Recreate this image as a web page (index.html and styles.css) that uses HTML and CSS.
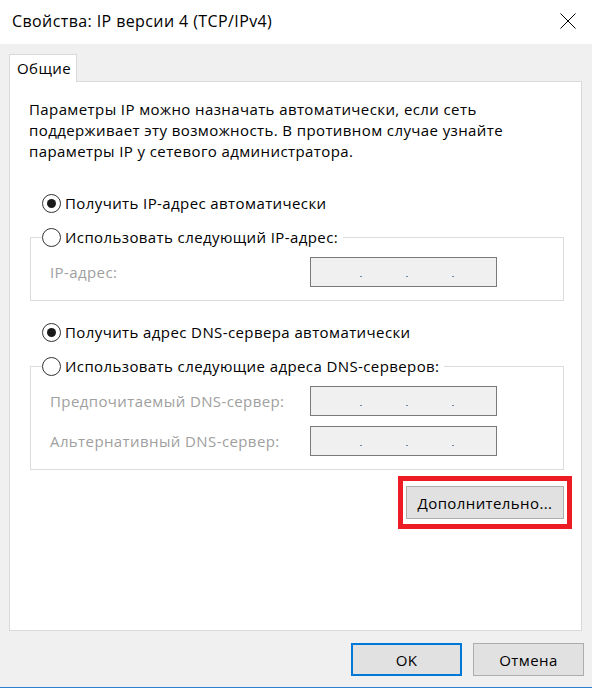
FILE: index.html
```html
<!DOCTYPE html>
<html lang="ru">
<head>
<meta charset="utf-8">
<title>Свойства: IP версии 4 (TCP/IPv4)</title>
<link rel="stylesheet" href="styles.css">
</head>
<body>
<div class="window">
  <div class="titlebar">
    <span class="title">Свойства: IP версии 4 (TCP/IPv4)</span>
    <svg class="close" width="16" height="16" viewBox="0 0 16 16"><path d="M0.5 0.5 L15.5 15.5 M15.5 0.5 L0.5 15.5" stroke="#000" stroke-width="1" fill="none"/></svg>
  </div>
  <div class="body">
    <div class="tabs"><div class="tab">Общие</div></div>
    <div class="panel">
      <p class="intro">Параметры IP можно назначать автоматически, если сеть поддерживает эту возможность. В противном случае узнайте параметры IP у сетевого администратора.</p>
      <div class="radio-row first"><span class="radio checked"></span><span>Получить IP-адрес автоматически</span></div>
      <fieldset class="group g1">
        <legend class="radio-row"><span class="radio"></span><span>Использовать следующий IP-адрес:</span></legend>
        <div class="field">
          <span class="flabel">IP-адрес:</span>
          <span class="ipbox"><i></i><i></i><i></i></span>
        </div>
      </fieldset>
      <div class="radio-row third"><span class="radio checked"></span><span>Получить адрес DNS-сервера автоматически</span></div>
      <fieldset class="group g2">
        <legend class="radio-row"><span class="radio"></span><span>Использовать следующие адреса DNS-серверов:</span></legend>
        <div class="field">
          <span class="flabel">Предпочитаемый DNS-сервер:</span>
          <span class="ipbox"><i></i><i></i><i></i></span>
        </div>
        <div class="field second">
          <span class="flabel">Альтернативный DNS-сервер:</span>
          <span class="ipbox"><i></i><i></i><i></i></span>
        </div>
      </fieldset>
      <div class="adv-row">
        <div class="highlight"><button class="btn adv">Дополнительно...</button></div>
      </div>
    </div>
    <div class="footer">
      <button class="btn ok">OK</button>
      <button class="btn">Отмена</button>
    </div>
  </div>
</div>
</body>
</html>
```

FILE: styles.css
```css
* { box-sizing: border-box; }
html, body { margin: 0; padding: 0; }
body {
  width: 592px;
  height: 688px;
  overflow: hidden;
  font-family: "Open Sans", "Liberation Sans", Arial, sans-serif;
  font-size: 15px;
  letter-spacing: 0.4px;
  color: #000;
  background: #f0f0f0;
}
.window {
  display: flex;
  flex-direction: column;
  height: 688px;
  border-bottom: 1px solid #2b7fd2;
}
.titlebar {
  height: 44px;
  background: #fff;
  display: flex;
  align-items: center;
  justify-content: space-between;
  padding: 0 16px 0 12px;
}
.title {
  font-size: 16px;
  margin-top: -2px;
}
.close { margin-top: -2px; }
.body {
  flex: 1;
  display: flex;
  flex-direction: column;
  padding: 10px 10px 0 9px;
}
.tabs { display: flex; }
.tab {
  width: 68px;
  height: 28px;
  background: #fff;
  border: 1px solid #d9d9d9;
  border-bottom: none;
  padding: 3px 0 0 7px;
  line-height: 21px;
  position: relative;
  z-index: 1;
  margin-bottom: -1px;
}
.panel {
  flex: 1;
  background: #fff;
  border: 1px solid #d9d9d9;
  padding: 17px 17px 0 19px;
  display: flex;
  flex-direction: column;
}
.intro {
  margin: 0;
  line-height: 21px;
}
.radio-row {
  display: flex;
  align-items: center;
  gap: 4px;
  line-height: 21px;
}
.radio {
  width: 19px;
  height: 19px;
  border: 1px solid #333;
  border-radius: 50%;
  background: #fff;
  display: flex;
  align-items: center;
  justify-content: center;
  flex: none;
}
.radio.checked::after {
  content: "";
  width: 9px;
  height: 9px;
  border-radius: 50%;
  background: #1a1a1a;
}
.first {
  margin: 31px 0 0 13px;
}
.group {
  margin: 13px 0 0 1px;
  border: 1px solid #dcdcdc;
  padding: 0 0 13px 11px;
  min-width: 0;
}
.group legend {
  padding: 0 5px 0 0;
}
.field {
  display: flex;
  align-items: center;
  justify-content: space-between;
  padding: 0 66px 0 8px;
  color: #a0a0a0;
}
.g1 .field { margin-top: 9px; }
.g2 .field { margin-top: 9px; }
.g2 .field.second { margin-top: 10px; }
.ipbox {
  width: 187px;
  height: 30px;
  background: #f0f0f0;
  border: 1px solid #7a7a7a;
  display: flex;
  align-items: center;
  padding: 8px 0 0 49px;
  gap: 44px;
}
.ipbox i {
  width: 2px;
  height: 1px;
  background: #6f8aa8;
}
.third {
  margin: 21px 0 0 13px;
}
.adv-row {
  display: flex;
  justify-content: flex-end;
  margin: 6px -8px 0 0;
}
.highlight {
  border: 5px solid #ed1c24;
  padding: 5px 3px;
  background: #fff;
}
.btn {
  font-family: inherit;
  font-size: 15px;
  letter-spacing: 0.4px;
  color: #000;
  background: #e1e1e1;
  border: 1px solid #adadad;
  border-radius: 0;
  height: 33px;
  width: 111px;
  padding: 0;
  margin: 0;
}
.btn.adv {
  width: 158px;
  display: block;
}
.btn.ok {
  border: 2px solid #0078d7;
}
.footer {
  display: flex;
  justify-content: flex-end;
  gap: 11px;
  margin: 12px -2px 11px 0;
}
```
